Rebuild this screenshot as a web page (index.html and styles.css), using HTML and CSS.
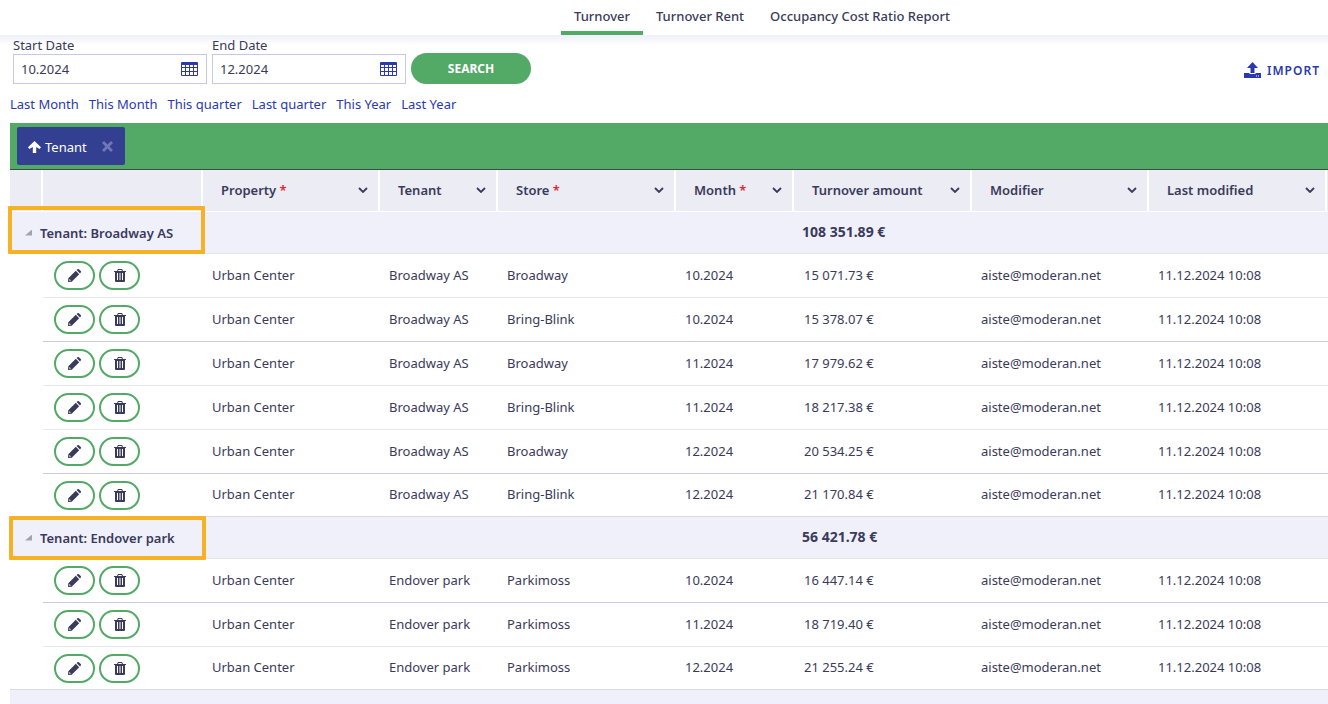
FILE: index.html
```
<!DOCTYPE html>
<html lang="en">
<head>
<meta charset="UTF-8">
<title>Turnover</title>
<link rel="stylesheet" href="styles.css">
</head>
<body>
<!-- icons -->
<svg class="sprite" aria-hidden="true">
  <symbol id="icon-calendar" viewBox="0 0 17 14">
    <path fill-rule="evenodd" d="M1 0h15a1 1 0 0 1 1 1v12a1 1 0 0 1-1 1H1a1 1 0 0 1-1-1V1a1 1 0 0 1 1-1zM1 3v2h3V3zM5 3v2h3V3zM9 3v2h3V3zM13 3v2h3V3zM1 6v3h3V6zM5 6v3h3V6zM9 6v3h3V6zM13 6v3h3V6zM1 10v3h3v-3zM5 10v3h3v-3zM9 10v3h3v-3zM13 10v3h3v-3z"/>
  </symbol>
  <symbol id="icon-upload" viewBox="0 0 17 16">
    <path fill-rule="evenodd" d="M8.500 0L14 6h-3.500v5h-4V6H3zM0 11h5.500v1h6v-1H17v5H0zM12 13.500v1h1v-1zM14 13.500v1h1v-1z"/>
  </symbol>
  <symbol id="icon-up" viewBox="0 0 13 12">
    <path d="M6.500 0L13 6.200l-1.400 1.800L8.200 6V12H4.800V6L1.400 8 0 6.200z"/>
  </symbol>
  <symbol id="icon-close" viewBox="0 0 11 11">
    <path d="M2 0l3.500 3.500L9 0l2 2-3.500 3.500L11 9l-2 2-3.500-3.500L2 11 0 9l3.500-3.500L0 2z"/>
  </symbol>
  <symbol id="icon-chevron" viewBox="0 0 10 6">
    <path d="M1 1l4 4 4-4" fill="none" stroke="currentColor" stroke-width="1.800"/>
  </symbol>
  <symbol id="icon-pencil" viewBox="0 0 13 13">
    <path fill-rule="evenodd" d="M7.800 1.800l3.400 3.400-7.500 7.500L0 13l.3-3.700zM1.500 10l-.3 1.800 1.800-.3zM8.600 1L9.400.3q.8-.6 1.500 0l1.800 1.800q.6.700 0 1.500l-.7.800z"/>
  </symbol>
  <symbol id="icon-trash" viewBox="0 0 12 13">
    <path fill-rule="evenodd" d="M4 0h4l1 2h3v1h-1v9q0 1-1 1H2q-1 0-1-1V3H0V2h3zM4.500 1l-.4 1h3.800l-.4-1zM3 4v7h1V4zM5.500 4v7h1V4zM8 4v7h1V4z"/>
  </symbol>
</svg>

<nav class="tabs">
  <a href="#" class="tab active">Turnover</a>
  <a href="#" class="tab">Turnover Rent</a>
  <a href="#" class="tab">Occupancy Cost Ratio Report</a>
</nav>

<main>
  <form class="filters">
    <div class="field">
      <label for="start-date">Start Date</label>
      <div class="date-box">
        <input type="text" id="start-date" value="10.2024">
        <button type="button" aria-label="Pick start date"><svg width="17" height="14"><use href="#icon-calendar"/></svg></button>
      </div>
    </div>
    <div class="field">
      <label for="end-date">End Date</label>
      <div class="date-box">
        <input type="text" id="end-date" value="12.2024">
        <button type="button" aria-label="Pick end date"><svg width="17" height="14"><use href="#icon-calendar"/></svg></button>
      </div>
    </div>
    <button type="submit" class="search">SEARCH</button>
    <button type="button" class="import"><svg width="17" height="16"><use href="#icon-upload"/></svg>IMPORT</button>
  </form>

  <div class="periods">
    <a href="#">Last Month</a>
    <a href="#">This Month</a>
    <a href="#">This quarter</a>
    <a href="#">Last quarter</a>
    <a href="#">This Year</a>
    <a href="#">Last Year</a>
  </div>

  <div class="grid">
    <div class="group-bar">
      <div class="chip">
        <svg width="13" height="12"><use href="#icon-up"/></svg>
        <span>Tenant</span>
        <button type="button" aria-label="Remove grouping"><svg width="11" height="11"><use href="#icon-close"/></svg></button>
      </div>
    </div>

    <table>
      <colgroup>
        <col class="c-indent"><col class="c-actions"><col class="c-medium"><col class="c-narrow"><col class="c-wide"><col class="c-narrow"><col class="c-wide"><col class="c-medium"><col class="c-wide"><col>
      </colgroup>
      <thead>
        <tr>
          <th></th>
          <th></th>
          <th><div class="head"><span>Property <i>*</i></span><svg width="10" height="6"><use href="#icon-chevron"/></svg></div></th>
          <th><div class="head"><span>Tenant</span><svg width="10" height="6"><use href="#icon-chevron"/></svg></div></th>
          <th><div class="head"><span>Store <i>*</i></span><svg width="10" height="6"><use href="#icon-chevron"/></svg></div></th>
          <th><div class="head"><span>Month <i>*</i></span><svg width="10" height="6"><use href="#icon-chevron"/></svg></div></th>
          <th><div class="head"><span>Turnover amount</span><svg width="10" height="6"><use href="#icon-chevron"/></svg></div></th>
          <th><div class="head"><span>Modifier</span><svg width="10" height="6"><use href="#icon-chevron"/></svg></div></th>
          <th><div class="head"><span>Last modified</span><svg width="10" height="6"><use href="#icon-chevron"/></svg></div></th>
          <th></th>
        </tr>
      </thead>
      <tbody id="rows"></tbody>
    </table>
  </div>
</main>

<script src="script.js"></script>
</body>
</html>
```

FILE: styles.css
```
* {
  box-sizing: border-box;
}

body {
  margin: 0;
  font-family: "Segoe UI", "Noto Sans", "Open Sans", sans-serif;
  font-size: 13px;
  line-height: 18px;
  color: #3a3a5a;
  background-color: #fff;
  overflow: hidden;
}

a {
  color: #2a3aae;
  text-decoration: none;
}

button {
  font-family: inherit;
  color: inherit;
  padding: 0;
  border: none;
  background: none;
  cursor: pointer;
}

svg {
  display: block;
  fill: currentColor;
}

.sprite {
  position: absolute;
  width: 0;
  height: 0;
}

/* tabs */
.tabs {
  display: flex;
  justify-content: center;
  padding-left: 196px;
}

.tab {
  height: 35px;
  padding: 7px 13px 0;
  border-bottom: 4px solid transparent;
  color: #3a3a5a;
  font-weight: 500;
}

.tab.active {
  border-color: #53a966;
}

main {
  padding-left: 10px;
  background: linear-gradient(#eeeff9, #fff 10px);
}

/* filters */
.filters {
  display: flex;
  align-items: flex-end;
  gap: 5px;
  padding: 1px 8px 0 3px;
}

.field {
  width: 194px;
}

.field label {
  display: block;
}

.date-box {
  display: flex;
  align-items: center;
  height: 30px;
  padding: 0 8px 0 7px;
  border: 1px solid #c5c9e6;
  background-color: #fff;
  color: #2a3aae;
}

.date-box input {
  flex: 1;
  min-width: 0;
  padding: 0;
  border: none;
  outline: none;
  font: inherit;
  color: #3a3a5a;
}

.search {
  width: 120px;
  height: 31px;
  border-radius: 16px;
  background-color: #53a966;
  color: #fff;
  font-size: 12px;
  font-weight: 700;
}

.import {
  display: flex;
  align-items: center;
  gap: 6px;
  height: 28px;
  margin-left: auto;
  color: #2a3aae;
  font-size: 12px;
  font-weight: 600;
  letter-spacing: 1px;
}

.periods {
  display: flex;
  gap: 10px;
  padding: 11px 0 10px;
}

/* grouping bar */
.group-bar {
  display: flex;
  height: 47px;
  padding: 4px 7px;
  border-bottom: 1px solid #3d4a48;
  background-color: #53a966;
}

.chip {
  display: flex;
  align-items: center;
  gap: 4px;
  width: 108px;
  height: 38px;
  padding: 1px 12px 0 11px;
  border-radius: 2px;
  background-color: #333f90;
  color: #fff;
}

.chip button {
  margin-left: auto;
  color: #6f78b3;
}

/* table */
table {
  width: 100%;
  table-layout: fixed;
  border-collapse: separate;
  border-spacing: 0;
}

.c-indent { width: 33px; }
.c-actions { width: 160px; }
.c-wide { width: 178px; }
.c-medium { width: 177px; }
.c-narrow { width: 118px; }

th,
td {
  padding: 0;
  text-align: left;
  white-space: nowrap;
}

th {
  height: 42px;
  padding-bottom: 2px;
  border-right: 2px solid #fff;
  border-bottom: 1px solid #fff;
  background-color: #ebecf4;
  font-weight: 600;
}

th:last-child {
  border-right: none;
}

.head {
  display: flex;
  align-items: center;
  justify-content: space-between;
  padding: 0 10px 0 18px;
}

.head i {
  color: #e3262e;
  font-style: normal;
}

.data td {
  height: 44px;
  padding: 0 0 2px 9px;
  border-bottom: 1px solid #e6e7f3;
}

.data:nth-child(3n) td {
  border-bottom-color: #c8cce8;
}

.data td:first-child {
  border-bottom: none;
}

.data .amount {
  padding-left: 10px;
}

.data .actions {
  padding: 0 0 0 11px;
}

/* last row of a group, line runs the full width */
.data.last td {
  height: 43px;
  border-bottom: 1px solid #d8dbf0;
}

.buttons {
  display: flex;
  gap: 4px;
}

.buttons button {
  display: flex;
  align-items: center;
  justify-content: center;
  width: 41px;
  height: 29px;
  border: 2px solid #53a966;
  border-radius: 15px;
  background-color: #fff;
}

.group td {
  position: relative;
  height: 42px;
  border-bottom: 1px solid #e3e4f2;
  background-color: #f0f0fa;
  font-weight: 600;
}

.group .total {
  padding: 0 0 2px 8px;
  font-size: 14px;
  font-weight: 700;
}

.group-name {
  display: flex;
  align-items: center;
  gap: 8px;
  padding-left: 15px;
}

.arrow {
  width: 7px;
  height: 6px;
  background-color: #a3a3ab;
  clip-path: polygon(100% 0, 100% 100%, 0 100%);
}

/* marker frame round the group title */
.marker {
  position: absolute;
  top: -1px;
  left: -1px;
  width: 197px;
  height: 44px;
  border: 4px solid #f6b124;
  border-radius: 1px;
}

.group:first-child .marker {
  top: -6px;
  left: -2px;
  height: 48px;
}
```

FILE: script.js
```
const groups = [
  {
    tenant: 'Broadway AS',
    total: '108 351.89 €',
    rows: [
      ['Broadway', '10.2024', '15 071.73 €'],
      ['Bring-Blink', '10.2024', '15 378.07 €'],
      ['Broadway', '11.2024', '17 979.62 €'],
      ['Bring-Blink', '11.2024', '18 217.38 €'],
      ['Broadway', '12.2024', '20 534.25 €'],
      ['Bring-Blink', '12.2024', '21 170.84 €']
    ]
  },
  {
    tenant: 'Endover park',
    total: '56 421.78 €',
    rows: [
      ['Parkimoss', '10.2024', '16 447.14 €'],
      ['Parkimoss', '11.2024', '18 719.40 €'],
      ['Parkimoss', '12.2024', '21 255.24 €']
    ]
  }
];

let html = '';
groups.forEach(group => {
  html += `
    <tr class="group">
      <td colspan="6"><div class="group-name"><span class="arrow"></span>Tenant: ${group.tenant}</div><span class="marker"></span></td>
      <td colspan="4" class="total">${group.total}</td>
    </tr>`;
  group.rows.forEach(([store, month, amount], index) => {
    html += `
    <tr class="data${index === group.rows.length - 1 ? ' last' : ''}">
      <td></td>
      <td class="actions"><div class="buttons">
        <button type="button" aria-label="Edit"><svg width="13" height="13"><use href="#icon-pencil"/></svg></button>
        <button type="button" aria-label="Delete"><svg width="12" height="13"><use href="#icon-trash"/></svg></button>
      </div></td>
      <td>Urban Center</td>
      <td>${group.tenant}</td>
      <td>${store}</td>
      <td>${month}</td>
      <td class="amount">${amount}</td>
      <td>aiste@moderan.net</td>
      <td>11.12.2024 10:08</td>
      <td></td>
    </tr>`;
  });
});
html += '<tr class="group"><td colspan="10"></td></tr>';

document.getElementById('rows').innerHTML = html;
```
